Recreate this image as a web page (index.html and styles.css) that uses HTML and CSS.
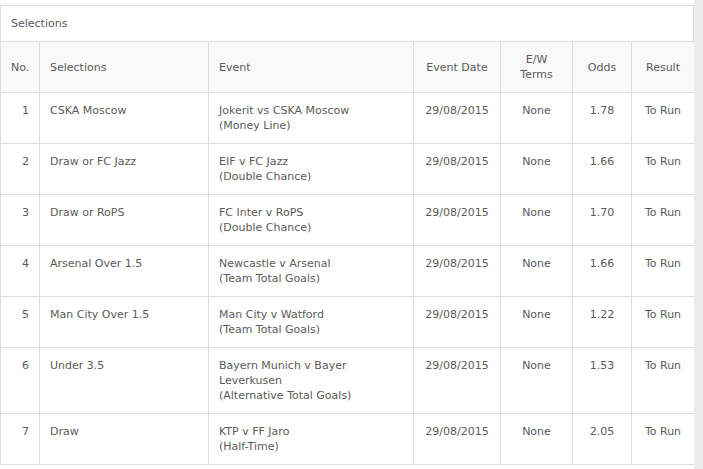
FILE: index.html
```html
<!DOCTYPE html>
<html>
<head>
<meta charset="utf-8">
<link rel="stylesheet" href="styles.css">
</head>
<body>
<div class="page">
  <div class="main">
    <div class="panel">
      <div class="panel-title">Selections</div>
      <table class="sel">
        <colgroup>
          <col class="c-no"><col class="c-sel"><col class="c-ev"><col class="c-date"><col class="c-ew"><col class="c-odds"><col class="c-res">
        </colgroup>
        <thead>
          <tr>
            <th class="left">No.</th>
            <th class="left">Selections</th>
            <th class="left">Event</th>
            <th>Event Date</th>
            <th>E/W<br>Terms</th>
            <th>Odds</th>
            <th>Result</th>
          </tr>
        </thead>
        <tbody>
          <tr><td class="num">1</td><td>CSKA Moscow</td><td>Jokerit vs CSKA Moscow<br>(Money Line)</td><td class="ctr">29/08/2015</td><td class="ctr">None</td><td class="ctr">1.78</td><td class="ctr">To Run</td></tr>
          <tr><td class="num">2</td><td>Draw or FC Jazz</td><td>EIF v FC Jazz<br>(Double Chance)</td><td class="ctr">29/08/2015</td><td class="ctr">None</td><td class="ctr">1.66</td><td class="ctr">To Run</td></tr>
          <tr><td class="num">3</td><td>Draw or RoPS</td><td>FC Inter v RoPS<br>(Double Chance)</td><td class="ctr">29/08/2015</td><td class="ctr">None</td><td class="ctr">1.70</td><td class="ctr">To Run</td></tr>
          <tr><td class="num">4</td><td>Arsenal Over 1.5</td><td>Newcastle v Arsenal<br>(Team Total Goals)</td><td class="ctr">29/08/2015</td><td class="ctr">None</td><td class="ctr">1.66</td><td class="ctr">To Run</td></tr>
          <tr><td class="num">5</td><td>Man City Over 1.5</td><td>Man City v Watford<br>(Team Total Goals)</td><td class="ctr">29/08/2015</td><td class="ctr">None</td><td class="ctr">1.22</td><td class="ctr">To Run</td></tr>
          <tr><td class="num">6</td><td>Under 3.5</td><td>Bayern Munich v Bayer Leverkusen<br>(Alternative Total Goals)</td><td class="ctr">29/08/2015</td><td class="ctr">None</td><td class="ctr">1.53</td><td class="ctr">To Run</td></tr>
          <tr><td class="num">7</td><td>Draw</td><td>KTP v FF Jaro<br>(Half-Time)</td><td class="ctr">29/08/2015</td><td class="ctr">None</td><td class="ctr">2.05</td><td class="ctr">To Run</td></tr>
        </tbody>
      </table>
    </div>
  </div>
  <div class="strip"></div>
</div>
</body>
</html>
```
FILE: styles.css
```css
html, body {
  margin: 0;
  padding: 0;
  background: #ffffff;
}
body {
  font-family: "DejaVu Sans", Verdana, sans-serif;
  font-size: 11px;
  line-height: 15px;
  color: #5a5a5a;
}
.page {
  display: flex;
  height: 469px;
  overflow: hidden;
}
.main {
  width: 694px;
  flex: none;
  padding-top: 5px;
}
.strip {
  flex: 1;
  background: #ececec;
}
.panel {
  border-top: 1px solid #dddddd;
}
.panel-title {
  padding: 10px;
  border-left: 1px solid #dddddd;
  border-right: 1px solid #dddddd;
  height: 15px;
}
.sel {
  border-collapse: collapse;
  table-layout: fixed;
  width: 694px;
}
.c-no { width: 39px; }
.c-sel { width: 169px; }
.c-ev { width: 205px; }
.c-date { width: 87px; }
.c-ew { width: 72px; }
.c-odds { width: 59px; }
.c-res { width: 63px; }
.sel th, .sel td {
  border: 1px solid #dddddd;
  padding: 10px 10px;
  vertical-align: top;
  font-weight: normal;
  text-align: left;
}
.sel th {
  background: #f9f9f9;
  height: 30px;
  vertical-align: middle;
  text-align: center;
  padding: 10px 4px;
}
.sel th.left {
  text-align: left;
  padding-left: 10px;
}
.sel td {
  height: 30px;
}
.sel td.num {
  text-align: right;
  padding-right: 10px;
}
.sel td.ctr {
  text-align: center;
  padding-left: 4px;
  padding-right: 4px;
}
```
